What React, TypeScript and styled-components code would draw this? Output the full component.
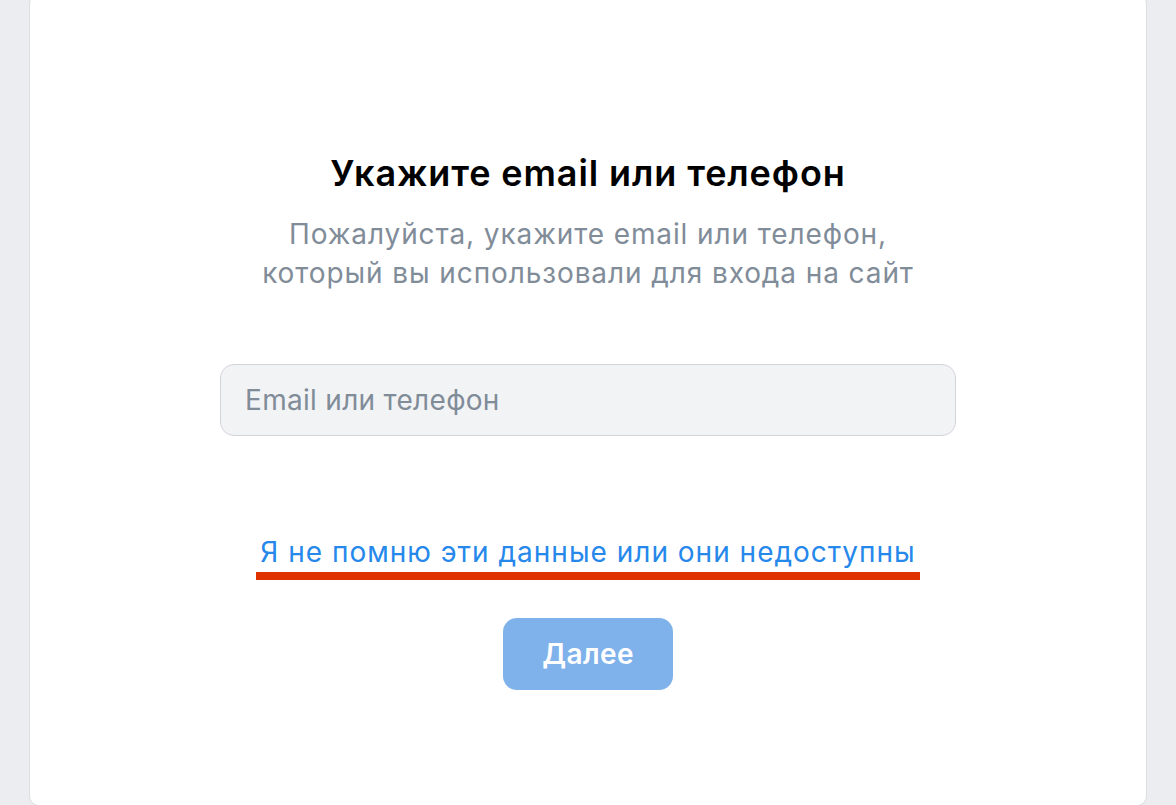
import styled, { createGlobalStyle } from "styled-components";

const GlobalStyle = createGlobalStyle`
  html, body {
    margin: 0;
    padding: 0;
    background: #ebedf0;
    font-family: Inter, "Noto Sans", sans-serif;
  }
`;

const Page = styled.div`
  display: flex;
  padding: 0 29px;
  height: 805px;
  overflow: hidden;
`;

const Card = styled.div`
  flex: 1;
  margin-top: -6px;
  height: 812px;
  background: #ffffff;
  border: 1px solid #dcdee2;
  border-radius: 10px;
  box-sizing: border-box;
  display: flex;
  flex-direction: column;
  align-items: center;
  padding-top: 155px;
`;

const Title = styled.h1`
  margin: 0;
  font: 600 36px/46px Inter, sans-serif;
  color: #000000;
  letter-spacing: 0.9px;
`;

const Subtitle = styled.p`
  margin: 19px 0 0;
  font: 400 28px/39px Inter, sans-serif;
  color: #818c99;
  text-align: center;
  letter-spacing: 0.9px;
`;

const Input = styled.input`
  margin-top: 71px;
  width: 736px;
  height: 72px;
  box-sizing: border-box;
  background: #f2f3f5;
  border: 1.5px solid #d3d5d9;
  border-radius: 14px;
  padding: 0 24px;
  font: 400 28px Inter, sans-serif;
  letter-spacing: 0.3px;
  color: #000;
  outline: none;
  &::placeholder {
    color: #818c99;
  }
`;

const LinkBlock = styled.div`
  margin-top: 98px;
  display: flex;
  flex-direction: column;
  align-items: center;
`;

const Link = styled.a`
  font: 400 28px/36px Inter, sans-serif;
  letter-spacing: 1px;
  color: #2688eb;
  text-decoration: none;
`;

const Mark = styled.div`
  margin-top: 2px;
  width: 664px;
  height: 8px;
  background: #e03200;
`;

const Button = styled.button`
  margin-top: 38px;
  width: 170px;
  height: 72px;
  border: none;
  border-radius: 14px;
  background: #7fb1ea;
  color: #ffffff;
  font: 600 28px Inter, sans-serif;
  letter-spacing: 0.4px;
`;

export default function App() {
  return (
    <>
      <GlobalStyle />
      <Page>
        <Card>
          <Title>Укажите email или телефон</Title>
          <Subtitle>
            Пожалуйста, укажите email или телефон,
            <br />
            который вы использовали для входа на сайт
          </Subtitle>
          <Input placeholder="Email или телефон" />
          <LinkBlock>
            <Link href="#">Я не помню эти данные или они недоступны</Link>
            <Mark />
          </LinkBlock>
          <Button>Далее</Button>
        </Card>
      </Page>
    </>
  );
}
